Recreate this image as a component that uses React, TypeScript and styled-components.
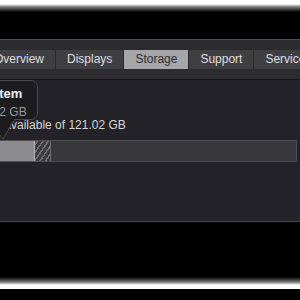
import styled, { createGlobalStyle } from "styled-components";

const GlobalStyle = createGlobalStyle`
  html, body {
    margin: 0;
    padding: 0;
    width: 100%;
    height: 100%;
    background: #000;
    overflow: hidden;
  }
  body {
    font-family: "Liberation Sans", "Noto Sans", sans-serif;
  }
`;

const Page = styled.div`
  width: 100vw;
  height: 100vh;
  display: flex;
  flex-direction: column;
  background: #000;
  overflow: hidden;
`;

const Edge = styled.div<{ $flip?: boolean }>`
  height: 12px;
  flex: none;
  background: linear-gradient(
    ${(p) => (p.$flip ? "to top" : "to bottom")},
    #fff 0px,
    #fff 4px,
    #777 7px,
    #000 12px
  );
`;

const Gap = styled.div<{ $h: number }>`
  height: ${(p) => p.$h}px;
  flex: none;
`;

const Window = styled.div`
  height: 183px;
  flex: none;
  display: flex;
  flex-direction: column;
  border-top: 1px solid #4e4e50;
  border-bottom: 1px solid #4a4a4c;
  box-sizing: border-box;
  position: relative;
  overflow: hidden;
`;

const TabBar = styled.div`
  height: 40px;
  flex: none;
  background: #2c2c2e;
  border-bottom: 1px solid #141414;
  box-sizing: border-box;
  padding-top: 10px;
`;

const Segmented = styled.div`
  display: flex;
  gap: 1px;
  margin-left: -17px;
  width: max-content;
  background: #2a2a2c;
`;

const Tab = styled.div<{ $active?: boolean }>`
  height: 19px;
  line-height: 19px;
  padding: 0 11px;
  font-size: 12px;
  color: ${(p) => (p.$active ? "#2e2e30" : "#dedee0")};
  background: ${(p) => (p.$active ? "#a6a6a8" : "#3f3f41")};
  white-space: nowrap;
`;

const Content = styled.div`
  flex: 1;
  background: #232327;
  padding-top: 38px;
  box-sizing: border-box;
  position: relative;
`;

const Info = styled.div`
  font-size: 12px;
  line-height: 14px;
  color: #d6d6d8;
  white-space: nowrap;
  margin-left: -33px;
`;

const Bar = styled.div`
  display: flex;
  height: 22px;
  margin: 8px 3px 0 -20px;
  background: #38383b;
  border: 1px solid #505053;
  box-sizing: border-box;
`;

const Used = styled.div<{ $w: number }>`
  width: ${(p) => p.$w}px;
  background: #8c8c8e;
  border-right: 1px solid #b4b4b6;
  box-sizing: border-box;
`;

const Purgeable = styled.div<{ $w: number }>`
  width: ${(p) => p.$w}px;
  border-right: 1px solid #6a6a6c;
  box-sizing: border-box;
  background: repeating-linear-gradient(
    -55deg,
    #3c3c3f 0px,
    #3c3c3f 3px,
    #707072 3px,
    #707072 4.5px
  );
`;

const Tooltip = styled.div`
  position: absolute;
  left: -33px;
  top: 0;
  width: 71px;
  height: 40px;
  box-sizing: border-box;
  padding: 5px 0 0 8px;
  background: #1c1c1e;
  border: 1px solid #4a4a4c;
  border-radius: 7px;
  z-index: 2;
`;

const TipTitle = styled.div`
  font-size: 13px;
  font-weight: 700;
  line-height: 16px;
  color: #f2f2f4;
`;

const TipSub = styled.div`
  font-size: 12px;
  line-height: 14px;
  margin-top: 3px;
  color: #98989a;
`;

const Tail = styled.svg`
  position: absolute;
  left: 19px;
  top: 37px;
  overflow: visible;
`;

export default function App() {
  const tabs = ["Overview", "Displays", "Storage", "Support", "Service"];
  return (
    <>
      <GlobalStyle />
      <Page>
        <Edge />
        <Gap $h={27} />
        <Window>
          <TabBar>
            <Segmented>
              {tabs.map((t) => (
                <Tab key={t} $active={t === "Storage"}>
                  {t}
                </Tab>
              ))}
            </Segmented>
          </TabBar>
          <Content>
            <Info>34 GB available of 121.02 GB</Info>
            <Bar>
              <Used $w={54} />
              <Purgeable $w={16} />
            </Bar>
            <Tooltip>
              <TipTitle>System</TipTitle>
              <TipSub>13.02 GB</TipSub>
              <Tail width="28" height="22" viewBox="0 0 28 22">
                <path d="M0 0 L28 0 L16 21 Z" fill="#1c1c1e" />
                <path d="M0 1 L16 21 L28 1" fill="none" stroke="#4a4a4c" strokeWidth="1" />
              </Tail>
            </Tooltip>
          </Content>
        </Window>
        <Gap $h={55} />
        <Edge $flip />
      </Page>
    </>
  );
}
